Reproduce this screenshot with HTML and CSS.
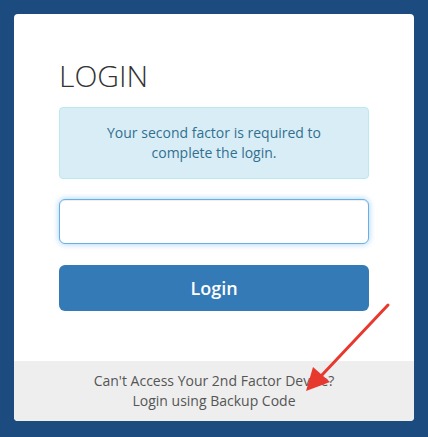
FILE: index.html
```html
<!DOCTYPE html>
<html lang="en">
<head>
  <meta charset="UTF-8">
  <meta name="viewport" content="width=device-width, initial-scale=1.0">
  <title>Login - Second Factor</title>
  <link rel="stylesheet" href="styles.css">
</head>
<body>
  <div class="card">
    <div class="card-body">
      <h1>LOGIN</h1>

      <div class="alert">
        Your second factor is required to complete the login.
      </div>

      <input type="text" class="code-input" id="code">

      <button class="login-button">Login</button>
    </div>

    <div class="card-footer">
      Can't Access Your 2nd Factor Device?<br>
      <a href="#" class="backup-link">Login using Backup Code</a>
    </div>

    <!-- annotation arrow -->
    <svg class="arrow" width="100" height="100" viewBox="0 0 100 100">
      <line x1="88" y1="6" x2="22" y2="76" stroke="#e8392f" stroke-width="3" stroke-linecap="round"/>
      <polygon points="6,92 13,68 30,83" fill="#e8392f"/>
    </svg>
  </div>
</body>
</html>
```

FILE: styles.css
```css
html, body {
  margin: 0;
  padding: 0;
}
body {
  font-family: "Open Sans", Arial, sans-serif;
  font-size: 14px;
  line-height: 20px;
  background-color: #1b4b7f;
  padding: 14px;
  height: 437px;
  box-sizing: border-box;
}
.card {
  position: relative;
  width: 400px;
  background-color: white;
  border-radius: 4px;
  overflow: hidden;
}
.card-body {
  padding: 44px 45px 50px;
}
h1 {
  margin: 0 0 13px;
  font-size: 30px;
  line-height: 36px;
  font-weight: 300;
  color: #333;
}
.alert {
  padding: 15px 30px;
  background-color: #d9edf7;
  border: 1px solid #bce8f1;
  border-radius: 4px;
  color: #31708f;
  text-align: center;
}
.code-input {
  display: block;
  width: 100%;
  height: 45px;
  margin-top: 20px;
  padding: 6px 12px;
  box-sizing: border-box;
  border: 1px solid #66afe9;
  border-radius: 6px;
  outline: none;
  box-shadow: inset 0 1px 1px rgba(0,0,0,0.075), 0 0 6px rgba(102,175,233,0.6);
  font-family: inherit;
  font-size: 16px;
}
.login-button {
  display: block;
  width: 100%;
  height: 46px;
  margin-top: 21px;
  background-color: #337ab7;
  color: white;
  border: none;
  border-radius: 6px;
  font-family: inherit;
  font-size: 18px;
  font-weight: 600;
  cursor: pointer;
}
.login-button:hover {
  background-color: #286090;
}
.card-footer {
  padding: 10px 15px;
  background-color: #eee;
  color: #555;
  text-align: center;
}
.backup-link {
  color: #555;
  text-decoration: none;
}
.arrow {
  position: absolute;
  left: 286px;
  top: 285px;
}
```
